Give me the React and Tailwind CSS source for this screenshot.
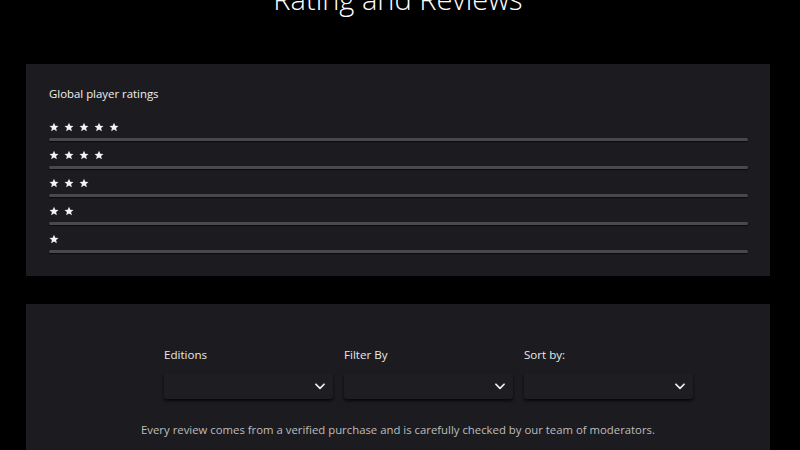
import React from "react";

function Star() {
  return (
    <svg width="10" height="10" viewBox="0 0 24 24" className="shrink-0">
      <path
        fill="#f2f2f2"
        d="M12 1.5l3.1 7.2 7.8.6-5.9 5.1 1.8 7.6L12 17.9 5.2 22l1.8-7.6L1.1 9.3l7.8-.6z"
      />
    </svg>
  );
}

function RatingRow({ n }) {
  return (
    <div className="flex flex-col">
      <div className="flex h-[14px] items-center gap-[5px]">
        {Array.from({ length: n }).map((_, i) => (
          <Star key={i} />
        ))}
      </div>
      <div className="mt-[4px] h-[3px] w-full rounded-full bg-[#48484d] shadow-[0_1px_1px_rgba(0,0,0,0.6)]" />
    </div>
  );
}

function Select({ label }) {
  return (
    <div className="flex w-[169px] flex-col">
      <div className="h-[18px] text-[11.6px] leading-[18px] text-[#e8e8e8]">{label}</div>
      <div className="mt-[9px] flex h-[26px] items-center justify-end rounded-[3px] bg-[#1e1e22] pr-[6px] shadow-[0_2px_3px_rgba(0,0,0,0.75)]">
        <svg width="14" height="14" viewBox="0 0 24 24" fill="none" stroke="#f0f0f0" strokeWidth="3" strokeLinecap="round" strokeLinejoin="round">
          <path d="M5 9l7 7 7-7" />
        </svg>
      </div>
    </div>
  );
}

export default function App() {
  return (
    <div
      className="flex h-[450px] w-[800px] flex-col overflow-hidden bg-black"
      style={{ fontFamily: '"Open Sans", "Noto Sans", sans-serif' }}
    >
      <div className="mt-[-16px] h-[30px] pr-[4px] text-center text-[29px] font-light leading-[30px] text-white">
        Rating and Reviews
      </div>
      <div className="ml-[26px] mr-[30px] mt-[50px] flex h-[212px] flex-col bg-[#1c1c20] pl-[23px] pr-[22px] pt-[21px]">
        <div className="h-[18px] text-[11.4px] leading-[18px] text-[#f0f0f0]">Global player ratings</div>
        <div className="mt-[17px] flex flex-col gap-[7px]">
          <RatingRow n={5} />
          <RatingRow n={4} />
          <RatingRow n={3} />
          <RatingRow n={2} />
          <RatingRow n={1} />
        </div>
      </div>
      <div className="ml-[26px] mr-[30px] mt-[28px] flex flex-1 flex-col bg-[#1c1c20] pt-[42px]">
        <div className="ml-[138px] flex gap-[11px]">
          <Select label="Editions" />
          <Select label="Filter By" />
          <Select label="Sort by:" />
        </div>
        <div className="mt-[22px] text-center text-[11.35px] leading-[18px] text-[#bdbdbd]">
          Every review comes from a verified purchase and is carefully checked by our team of moderators.
        </div>
      </div>
    </div>
  );
}
